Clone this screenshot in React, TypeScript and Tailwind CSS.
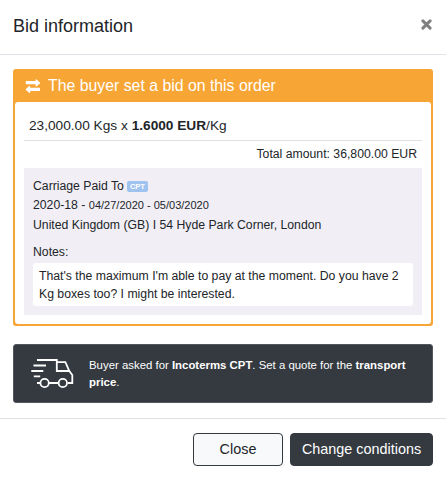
import React from "react";

function ExchangeIcon() {
  return (
    <svg viewBox="0 0 16 14" className="h-[14px] w-4 shrink-0" fill="currentColor">
      <path d="M1.400 2H10.600V.8c0-.5.6-.8 1-.4l3.400 3c.3.3.3.700 0 1l-3.400 2.800c-.4.4-1 .1-1-.4V5.200H1.400c-.4 0-.700-.3-.700-.700V2.700c0-.4.3-.7.700-.7z" />
      <path d="M14.300 8.800H5.200V7.500c0-.5-.6-.8-1-.4L.9 10c-.3.3-.3.7 0 1l3.300 2.800c.4.4 1 .1 1-.4V12h9.100c.4 0 .7-.3.7-.7V9.500c0-.4-.3-.7-.7-.7z" />
    </svg>
  );
}

function CloseIcon() {
  return (
    <svg viewBox="0 0 11 11" className="block h-[11px] w-[11px]" fill="none" stroke="currentColor" strokeWidth="3" strokeLinecap="round">
      <path d="M1.9 1.9 9.1 9.1M9.1 1.9 1.9 9.1" />
    </svg>
  );
}

function TruckIcon() {
  return (
    <svg viewBox="0 0 44 30" className="h-[30px] w-11 shrink-0" fill="none" stroke="currentColor" strokeWidth="1.800">
      <path d="M6 1H25.800v11h13M25.800 3.200h8.600l3.900 8.800 3 4v8h-4.300M27.500 24H18M9.200 24H6" />
      <path d="M2.500 6.500H15M.3 12H12.300M2.800 17.300H9.200" />
      <circle cx="13.600" cy="24" r="4.200" />
      <circle cx="31.800" cy="24" r="4.200" />
    </svg>
  );
}

export default function App() {
  return (
    <div className="h-[478px] w-[446px] overflow-hidden bg-white font-['Liberation_Sans',Arial,sans-serif] text-[12.24px] leading-[19px] text-[#212529]">
      <header className="flex h-[55px] items-center justify-between border-b border-[#dee2e6] pr-[14px] pl-[13px]">
        <h1 className="mb-[2px] text-[18px] leading-[27px]">Bid information</h1>
        <button aria-label="Close" className="mb-[6px] text-[#808080]">
          <CloseIcon />
        </button>
      </header>

      <main className="px-[13px] pt-[14px]">
        <section className="h-[257px] rounded-[3px] bg-[#f7a535] px-[2px] pb-[2px]">
          <h2 className="flex h-[33px] items-center gap-[7px] pl-[10px] text-[15.84px] text-white">
            <ExchangeIcon />
            <span>The buyer set a bid on this order</span>
          </h2>
          <div className="h-[222px] rounded-[3px] bg-white px-[9px] pt-[9px]">
            <p className="h-[30px] border-b border-[#dee2e6] pt-[5px] pl-[5px] text-[13.68px]">
              23,000.00 Kgs x <b>1.6000 EUR</b>/Kg
            </p>
            <p className="h-[27px] pt-1 pr-[5px] text-right">Total amount: 36,800.00 EUR</p>
            <div className="h-[147px] bg-[#f1eff5] px-[9px] pt-[8px]">
              <p className="flex h-[20px] items-center gap-[3px]">
                Carriage Paid To
                <span className="h-[11px] w-[21px] rounded-[2px] bg-[#9fc3ee] text-center text-[7.5px] leading-[11px] font-bold text-white">CPT</span>
              </p>
              <p className="h-5">
                2020-18 - <span className="text-[11.02px]">04/27/2020 - 05/03/2020</span>
              </p>
              <p className="h-[27px]">United Kingdom (GB) I 54 Hyde Park Corner, London</p>
              <p className="h-5">Notes:</p>
              <p className="h-[43px] rounded-[3px] bg-white px-[6px] pt-[4px] leading-[18px]">
                That's the maximum I'm able to pay at the moment. Do you have 2 Kg boxes too? I might be interested.
              </p>
            </div>
          </div>
        </section>

        <section className="mt-[18px] flex h-[59px] items-center rounded-[3px] border border-[#52575c] bg-[#343a40] pr-5 pl-[17px] text-[11.4px] leading-[17px] text-white">
          <TruckIcon />
          <p className="ml-[14px]">
            Buyer asked for <b>Incoterms CPT</b>. Set a quote for the <b>transport price</b>.
          </p>
        </section>
      </main>

      <footer className="mt-[15px] flex justify-end gap-[7px] border-t border-[#dee2e6] px-[13px] pt-[14px] text-[14.4px]">
        <button className="h-[33px] w-[90px] rounded-[4px] border border-[#343a40] bg-[#f8f9fa]">Close</button>
        <button className="h-[33px] w-[143px] rounded-[4px] border border-[#343a40] bg-[#343a40] text-white">Change conditions</button>
      </footer>
    </div>
  );
}
